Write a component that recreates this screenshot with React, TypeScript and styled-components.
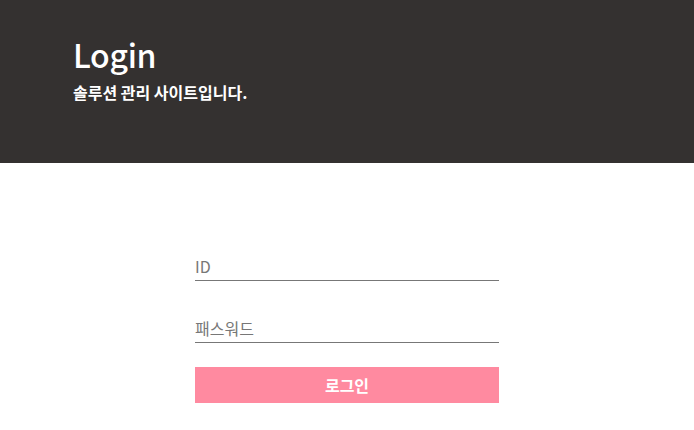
import React from "react";
import styled, { createGlobalStyle } from "styled-components";

const FONT = `"Noto Sans CJK KR", "Noto Sans", sans-serif`;

const Global = createGlobalStyle`
  html, body { margin: 0; padding: 0; background: #fff; }
  body { font-family: ${FONT}; }
  * { box-sizing: border-box; }
`;

const Header = styled.header`
  height: 163px;
  background: #343130;
  color: #fff;
  padding: 34px 0 0 73px;
`;

const Title = styled.h1`
  margin: 0;
  font-size: 32px;
  font-weight: 500;
  line-height: 40px;
  letter-spacing: -0.3px;
`;

const Subtitle = styled.p`
  margin: 8px 0 0;
  font-size: 16px;
  font-weight: 700;
  line-height: 20px;
`;

const Form = styled.form`
  width: 304px;
  margin: 88px auto 0;
  display: flex;
  flex-direction: column;
`;

const Input = styled.input<{ $gap: number }>`
  height: 30px;
  border: none;
  border-bottom: 1px solid #777;
  padding: 0;
  margin-bottom: ${(p) => p.$gap}px;
  font-family: ${FONT};
  font-size: 16px;
  color: #333;
  outline: none;
  background: transparent;
  &::placeholder { color: #777; }
`;

const Button = styled.button`
  height: 36px;
  border: none;
  background: #ff8aa0;
  color: #fff;
  font-family: ${FONT};
  font-size: 16px;
  font-weight: 700;
  cursor: pointer;
`;

export default function App() {
  return (
    <>
      <Global />
      <Header>
        <Title>Login</Title>
        <Subtitle>솔루션 관리 사이트입니다.</Subtitle>
      </Header>
      <Form onSubmit={(e) => e.preventDefault()}>
        <Input $gap={32} placeholder="ID" />
        <Input $gap={24} type="password" placeholder="패스워드" />
        <Button type="submit">로그인</Button>
      </Form>
    </>
  );
}
